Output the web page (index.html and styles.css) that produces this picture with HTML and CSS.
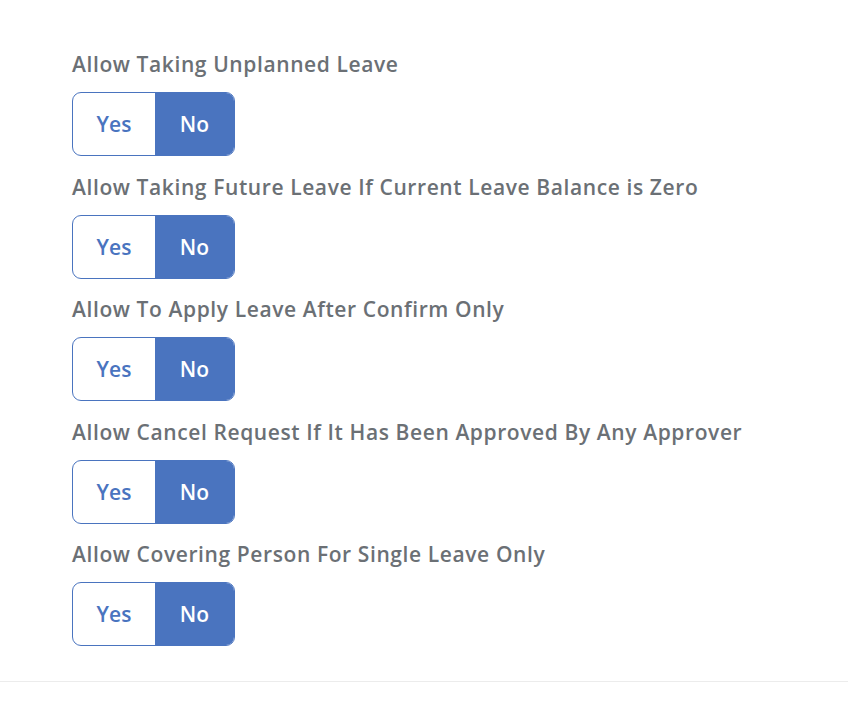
FILE: index.html
```html
<!DOCTYPE html>
<html>
<head>
<meta charset="utf-8">
<link rel="stylesheet" href="styles.css">
</head>
<body>
<div class="settings">
  <div class="setting">
    <div class="label">Allow Taking Unplanned Leave</div>
    <div class="toggle"><span class="opt">Yes</span><span class="opt active">No</span></div>
  </div>
  <div class="setting">
    <div class="label">Allow Taking Future Leave If Current Leave Balance is Zero</div>
    <div class="toggle"><span class="opt">Yes</span><span class="opt active">No</span></div>
  </div>
  <div class="setting">
    <div class="label">Allow To Apply Leave After Confirm Only</div>
    <div class="toggle"><span class="opt">Yes</span><span class="opt active">No</span></div>
  </div>
  <div class="setting">
    <div class="label">Allow Cancel Request If It Has Been Approved By Any Approver</div>
    <div class="toggle"><span class="opt">Yes</span><span class="opt active">No</span></div>
  </div>
  <div class="setting">
    <div class="label">Allow Covering Person For Single Leave Only</div>
    <div class="toggle"><span class="opt">Yes</span><span class="opt active">No</span></div>
  </div>
</div>
<div class="divider"></div>
</body>
</html>
```
FILE: styles.css
```css
html, body {
  margin: 0;
  padding: 0;
  background: #ffffff;
}
body {
  font-family: "Open Sans", "Lato", sans-serif;
}
.settings {
  padding: 50px 0 0 72px;
  display: flex;
  flex-direction: column;
  gap: 16.5px;
}
.setting {
  display: flex;
  flex-direction: column;
  align-items: flex-start;
  gap: 14px;
}
.label {
  height: 28px;
  line-height: 28px;
  font-size: 21px;
  font-weight: 600;
  color: #6b7075;
  letter-spacing: 0.6px;
}
.toggle {
  display: flex;
  width: 163px;
  height: 64px;
  box-sizing: border-box;
  border: 1px solid #4a74bf;
  border-radius: 9px;
  overflow: hidden;
}
.opt {
  display: flex;
  align-items: center;
  justify-content: center;
  font-size: 21px;
  font-weight: 600;
  color: #4a74bf;
}
.opt:first-child {
  width: 82px;
}
.opt.active {
  flex: 1;
  background: #4a74bf;
  color: #ffffff;
}
.divider {
  margin-top: 35px;
  height: 1px;
  background: #ececec;
}
```
